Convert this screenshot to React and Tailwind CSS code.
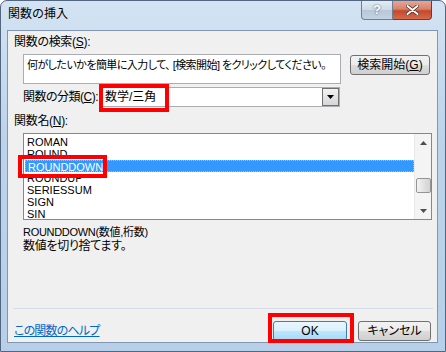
import React from 'react';

const items = ['ROMAN', 'ROUND', 'ROUNDDOWN', 'ROUNDUP', 'SERIESSUM', 'SIGN', 'SIN'];

const font = "font-['Liberation_Sans','Noto_Sans_CJK_JP',sans-serif]";

function WinButton({ children, primary }) {
  return (
    <div
      className={
        'flex items-center justify-center h-[20px] rounded-[3px] border text-[12px] ' +
        (primary
          ? 'border-[#3c7fb1] bg-[linear-gradient(#eaf6fd_0%,#d9f0fc_50%,#bee6fd_51%,#a7d9f5_100%)]'
          : 'border-[#707070] bg-[linear-gradient(#f2f2f2_0%,#ebebeb_50%,#dddddd_51%,#cfcfcf_100%)]')
      }
    >
      {children}
    </div>
  );
}

export default function App() {
  return (
    <div className={`relative w-[446px] h-[352px] overflow-hidden whitespace-nowrap rounded-t-[7px] border border-[#52667f] bg-[linear-gradient(180deg,#d3e3f3_0%,#bcd3eb_40%,#b7cfe8_100%)] text-black ${font} [font-feature-settings:'palt']`}>
      {/* title bar */}
      <div className="flex h-[29px] items-start">
        <div className="pl-[7px] pt-[5px] text-[12px] leading-[16px] [font-feature-settings:normal] text-black">関数の挿入</div>
        <div className="ml-auto mr-[13px] flex">
          <div className="flex h-[19px] w-[32px] items-center justify-center rounded-bl-[4px] border border-t-0 border-[#6d7f96] bg-[linear-gradient(#e3ebf4_0%,#cdd9e6_50%,#b8c7d8_51%,#c4d3e3_100%)] text-[13px] font-bold text-white [text-shadow:0_0_2px_#34455c]">
            ?
          </div>
          <div className="flex h-[19px] w-[39px] items-center justify-center rounded-br-[4px] border border-l-0 border-t-0 border-[#6d3a34] bg-[linear-gradient(#e8a593_0%,#d8826a_45%,#c5462c_55%,#d86a4a_100%)]">
            <svg width="13" height="10" viewBox="0 0 13 10">
              <path d="M1.5 1 L11.5 9 M11.5 1 L1.5 9" stroke="#3b2a2a" strokeWidth="3.4" strokeLinecap="round" />
              <path d="M1.5 1 L11.5 9 M11.5 1 L1.5 9" stroke="#ffffff" strokeWidth="2" strokeLinecap="round" />
            </svg>
          </div>
        </div>
      </div>

      {/* client area */}
      <div className="ml-[6px] h-[313px] w-[431px] overflow-hidden border border-[#8196b0] bg-[#f0f0f0] text-[12px] leading-[14px]">
        <div className="h-[14px] pl-[6px] mt-[4px] tracking-[-0.3px]">関数の検索(<span className="underline">S</span>):</div>

        <div className="mt-[5px] flex items-start pl-[15px]">
          <div className="h-[30px] w-[318px] overflow-hidden border border-[#abadb3] bg-white px-[3px] pt-[3px] text-[11px] tracking-[-0.55px]">
            何がしたいかを簡単に入力して、 [検索開始] をクリックしてください。
          </div>
          <div className="ml-[9px] mt-[1px] w-[80px]">
            <WinButton>検索開始(<span className="underline">G</span>)</WinButton>
          </div>
        </div>

        <div className="mt-[3px] flex h-[20px] items-center pl-[15px]">
          <div className="w-[77px] tracking-[-0.5px]">関数の分類(<span className="underline">C</span>):</div>
          <div className="flex h-[20px] w-[240px] items-center border border-[#abadb3] bg-white">
            <div className="flex-1 pl-[4px]">数学/三角</div>
            <div className="flex h-[18px] w-[17px] items-center justify-center border border-[#707070] bg-[linear-gradient(#f2f2f2,#d6d6d6)]">
              <svg width="7" height="4" viewBox="0 0 7 4">
                <path d="M0 0 H7 L3.5 4 Z" fill="#000" />
              </svg>
            </div>
          </div>
        </div>

        <div className="mt-[7px] h-[14px] pl-[6px] tracking-[-0.3px]">関数名(<span className="underline">N</span>):</div>

        <div className="mt-[5px] ml-[15px] flex h-[87px] w-[409px] overflow-hidden border border-[#828790] bg-white">
          <div className="flex-1 pt-[2px] pl-[1px]">
            {items.map((it) => (
              <div
                key={it}
                className={
                  "h-[12px] pl-[2px] text-[11px] leading-[12px] " +
                  (it === 'ROUNDDOWN' ? 'border border-dotted border-[#f3b14f] bg-[#3399ff] text-white' : '')
                }
              >
                {it}
              </div>
            ))}
          </div>
          <div className="flex w-[17px] flex-col items-center bg-[#f4f4f4] border-l border-[#e9e9e9]">
            <div className="flex h-[17px] w-full items-center justify-center">
              <svg width="7" height="4" viewBox="0 0 7 4"><path d="M0 4 H7 L3.5 0 Z" fill="#4d4d4d" /></svg>
            </div>
            <div className="mt-[27px] h-[15px] w-[15px] rounded-[2px] border border-[#959595] bg-[linear-gradient(90deg,#f3f3f3,#e2e2e2_50%,#d2d2d2)]" />
            <div className="mt-auto flex h-[17px] w-full items-center justify-center">
              <svg width="7" height="4" viewBox="0 0 7 4"><path d="M0 0 H7 L3.5 4 Z" fill="#4d4d4d" /></svg>
            </div>
          </div>
        </div>

        <div className="mt-[6px] pl-[15px]">
          <div className="h-[13px] text-[11px] leading-[13px] tracking-[-0.3px]">ROUNDDOWN(数値,桁数)</div>
          <div className="h-[14px] leading-[14px] tracking-[-0.3px]">数値を切り捨てます。</div>
        </div>

        <div className="mt-[55px] ml-[6px] mr-[4px] border-t border-[#d4dde7]" />

        <div className="mt-[12px] flex items-center pl-[6px] pr-[6px]">
          <div className="text-[#0066cc] underline tracking-[-0.8px]">この関数のヘルプ</div>
          <div className="ml-auto w-[74px]">
            <WinButton primary>OK</WinButton>
          </div>
          <div className="ml-[11px] w-[73px]">
            <WinButton>キャンセル</WinButton>
          </div>
        </div>
      </div>

      {/* red annotation boxes */}
      <div className="absolute left-[98px] top-[83px] h-[28px] w-[70px] border-[4px] border-[#ff0000]" />
      <div className="absolute left-[17px] top-[154px] h-[23px] w-[89px] border-[4px] border-[#ff0000]" />
      <div className="absolute left-[267px] top-[312px] h-[30px] w-[86px] border-[4px] border-[#ff0000]" />
    </div>
  );
}
